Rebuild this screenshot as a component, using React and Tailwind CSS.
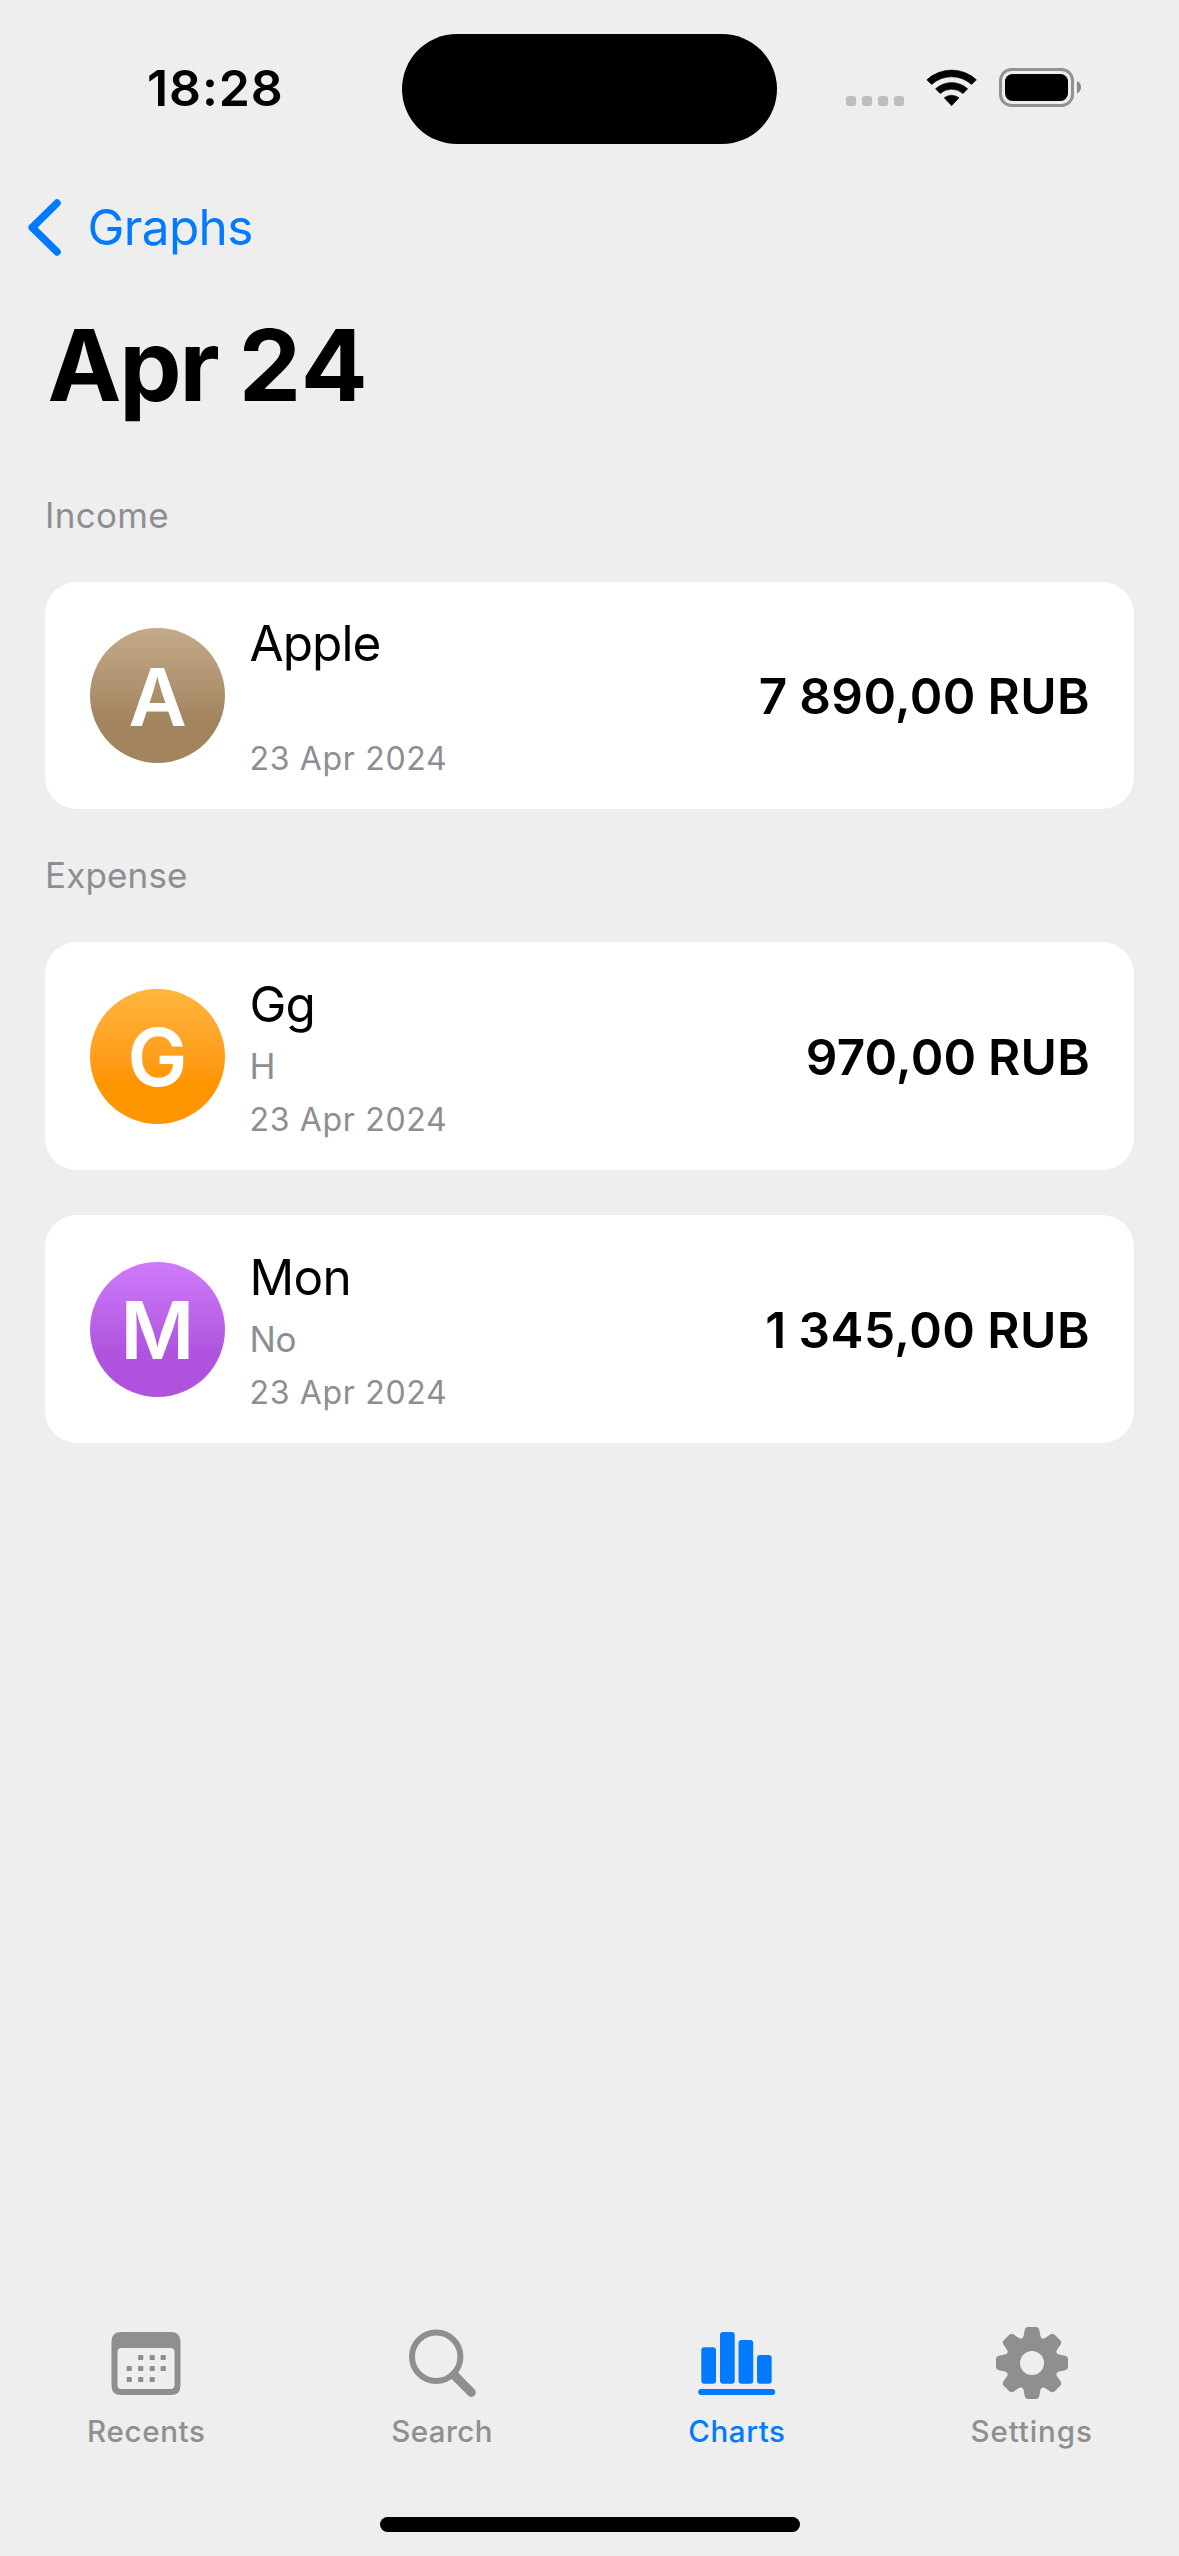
const income = [
  {
    letter: "A",
    name: "Apple",
    nameClass: "tracking-[-0.94px]",
    note: "",
    date: "23 Apr 2024",
    amount: "7 890,00 RUB",
    amountClass: "tracking-[0.35px] pt-px",
    cardClass: "h-[227px]",
    avatarClass: "from-[#c4aa8a] to-[#a2845e]",
  },
];

const expenses = [
  {
    letter: "G",
    name: "Gg",
    nameClass: "tracking-[-1px]",
    note: "H",
    date: "23 Apr 2024",
    amount: "970,00 RUB",
    amountClass: "tracking-[0.2px] pt-[2px]",
    cardClass: "h-[228px]",
    avatarClass: "from-[#ffb53c] to-[#ff9500]",
  },
  {
    letter: "M",
    name: "Mon",
    nameClass: "tracking-[-0.7px]",
    note: "No",
    date: "23 Apr 2024",
    amount: "1 345,00 RUB",
    amountClass: "tracking-[0.45px] pt-[2px]",
    cardClass: "h-[228px]",
    avatarClass: "from-[#ce7bfa] to-[#af52de]",
  },
];

function StatusBar() {
  return (
    <header className="grid h-[156px] shrink-0 grid-cols-[401.5px_375.5px_1fr]">
      <div className="pl-[147px] pt-[58px] text-[50px] font-semibold leading-[60px] tracking-[0.9px]">
        18:28
      </div>
      <div className="mt-[33.5px] h-[110.5px] rounded-full bg-black" />
      <div className="flex items-start pl-[69px] pt-[68px]">
        <div className="mt-[28px] flex gap-[6px]">
          {[0, 1, 2, 3].map((i) => (
            <span key={i} className="size-[10px] rounded-[3px] bg-[#bdbdbd]" />
          ))}
        </div>
        <svg className="ml-[22px] h-[39px] w-[52px]" viewBox="0 0 52 39">
          <path d="M0.8 11.8 A36.5 36.5 0 0 1 50.4 11.8 L45.6 16.6 A29.5 29.5 0 0 0 5.6 16.6 Z" strokeLinejoin="round" stroke="#000" strokeWidth="0.6" />
          <path d="M9.5 20.8 A24 24 0 0 1 41.7 20.8 L37 25.6 A17 17 0 0 0 14.2 25.6 Z" strokeLinejoin="round" stroke="#000" strokeWidth="0.6" />
          <path d="M18.2 29.8 A12 12 0 0 1 33 29.8 L25.6 37.7 Z" strokeLinejoin="round" stroke="#000" strokeWidth="0.6" />
        </svg>
        <svg className="ml-[21px] h-[39px] w-[82px]" viewBox="0 0 82 39">
          <rect x="1.5" y="1.5" width="72" height="36" rx="11" fill="none" stroke="#929292" strokeWidth="3" />
          <rect x="6" y="6" width="63" height="27" rx="7.5" />
          <path d="M78 13 Q82 15 82 19.3 Q82 23.6 78 25.5 Z" fill="#8a8a8a" />
        </svg>
      </div>
    </header>
  );
}

function Avatar({ letter, className }) {
  return (
    <div
      className={`flex size-[135px] items-center justify-center rounded-full bg-linear-to-b to-70% pt-[2px] text-[80px] font-semibold leading-none text-white ${className}`}
    >
      {letter}
    </div>
  );
}

function TransactionCard({ item }) {
  return (
    <article className={`flex items-center rounded-[32px] bg-white px-[45px] ${item.cardClass}`}>
      <Avatar letter={item.letter} className={item.avatarClass} />
      <div className="ml-[24.5px] flex flex-col">
        <h3 className={`h-[60px] text-[49.5px] leading-[62px] ${item.nameClass}`}>{item.name}</h3>
        <p className="h-[67px] text-[35px] leading-[67px] tracking-[-0.3px] text-[#8e8e92]">{item.note}</p>
        <p className="h-[40px] text-[32px] leading-[40px] tracking-[0.68px] text-[#8e8e92]">{item.date}</p>
      </div>
      <div className={`-mr-px ml-auto text-[49.5px] font-semibold leading-[60px] [word-spacing:-1px] ${item.amountClass}`}>
        {item.amount}
      </div>
    </article>
  );
}

function Section({ title, titleClass, items }) {
  return (
    <section>
      <h2 className={`text-[35px] leading-[133px] text-[#8e8e92] ${titleClass}`}>{title}</h2>
      <div className="flex flex-col gap-[45px]">
        {items.map((item) => (
          <TransactionCard key={item.name} item={item} />
        ))}
      </div>
    </section>
  );
}

function CalendarIcon() {
  const dots = [
    [30.5, 27], [42, 27], [53, 27],
    [19, 38], [30.5, 38], [42, 38], [53, 38],
    [19, 49], [30.5, 49], [42, 49],
  ];
  return (
    <svg className="h-[72px] w-[72px] -translate-x-px" viewBox="0 0 72 72" fill="currentColor">
      <path
        fillRule="evenodd"
        d="M11 5 H61 Q70.5 5 70.5 14.5 V58.5 Q70.5 68 61 68 H11 Q1.5 68 1.5 58.5 V14.5 Q1.5 5 11 5 Z M11.5 21 Q7.5 21 7.5 25 V58 Q7.5 62 11.5 62 H60.5 Q64.5 62 64.5 58 V25 Q64.5 21 60.5 21 Z"
      />
      {dots.map(([x, y]) => (
        <rect key={`${x}-${y}`} x={x - 2.4} y={y + 0.9} width="5.2" height="5.2" rx="1.2" />
      ))}
    </svg>
  );
}

function SearchIcon() {
  return (
    <svg className="h-[72px] w-[72px]" viewBox="0 0 72 72" fill="none" stroke="currentColor">
      <circle cx="30.2" cy="29.8" r="24.2" strokeWidth="6" />
      <path d="M48 48 L65.3 65.4" strokeWidth="9" strokeLinecap="round" />
    </svg>
  );
}

function ChartIcon() {
  return (
    <svg className="h-[72px] w-[78px]" viewBox="0 0 78 72" fill="currentColor">
      <rect x="3.3" y="20.3" width="14.7" height="36.5" rx="3" />
      <rect x="22" y="5" width="14.7" height="51.8" rx="3" />
      <rect x="40.5" y="13" width="14.7" height="43.8" rx="3" />
      <rect x="59" y="28" width="14.7" height="28.8" rx="3" />
      <rect x="0.2" y="62" width="77" height="6" rx="3" />
    </svg>
  );
}

function GearIcon() {
  return (
    <svg className="h-[72px] w-[72px]" viewBox="-36 -36 72 72" fill="currentColor">
      <circle r="26" />
      {[0, 45, 90, 135, 180, 225, 270, 315].map((angle) => (
        <path
          key={angle}
          transform={`rotate(${angle})`}
          d="M-10.3 -24.5 Q-8.8 -25.2 -8.4 -27 L-7.3 -33 Q-6.6 -36 -4 -36 H4 Q6.6 -36 7.3 -33 L8.4 -27 Q8.8 -25.2 10.3 -24.5 L0 0 Z"
        />
      ))}
      <circle r="12" fill="#eeeeee" />
    </svg>
  );
}

const tabs = [
  { label: "Recents", Icon: CalendarIcon, className: "text-[#8f8f91]", labelClass: "tracking-[0.68px] -translate-x-px" },
  { label: "Search", Icon: SearchIcon, className: "text-[#8f8f91]", labelClass: "tracking-[0.44px]" },
  { label: "Charts", Icon: ChartIcon, className: "text-[#007aff]", labelClass: "tracking-[0.63px]" },
  { label: "Settings", Icon: GearIcon, className: "text-[#8f8f91]", labelClass: "tracking-[0.91px]" },
];

function TabBar() {
  return (
    <nav className="mb-[57px] grid grid-cols-4">
      {tabs.map(({ label, Icon, className, labelClass }) => (
        <a key={label} className={`flex flex-col items-center ${className}`}>
          <span className="flex h-[80px] items-center">
            <Icon />
          </span>
          <span className={`text-[29.5px] font-medium leading-[57px] ${labelClass}`}>{label}</span>
        </a>
      ))}
    </nav>
  );
}

export default function App() {
  return (
    <div className="flex h-[2556px] w-[1179px] flex-col overflow-hidden bg-[#eeeeee] font-['Inter',sans-serif] text-black">
      <StatusBar />
      <div className="flex h-[142px] items-center pl-[28px] text-[#007aff]">
        <svg className="h-[57px] w-[33px]" viewBox="0 0 33 57" fill="none" stroke="currentColor" strokeWidth="7.5" strokeLinecap="round" strokeLinejoin="round">
          <path d="M29 4.1 L4.2 28.5 L29 52.9" />
        </svg>
        <span className="ml-[26.5px] text-[49.5px] leading-[60px] tracking-[-0.65px]">Graphs</span>
      </div>
      <h1 className="mb-[17px] pl-[47.5px] text-[99px] font-bold leading-[134px]">
        <span className="tracking-[-2.2px]">Apr </span>
        <span className="tracking-[1.2px]">24</span>
      </h1>
      <main className="flex flex-col px-[45px]">
        <Section title="Income" titleClass="tracking-[0.3px]" items={income} />
        <Section title="Expense" titleClass="tracking-[0.15px]" items={expenses} />
      </main>
      <div className="flex-1" />
      <TabBar />
      <div className="mx-auto mb-[24px] h-[15px] w-[420px] rounded-full bg-black" />
    </div>
  );
}
